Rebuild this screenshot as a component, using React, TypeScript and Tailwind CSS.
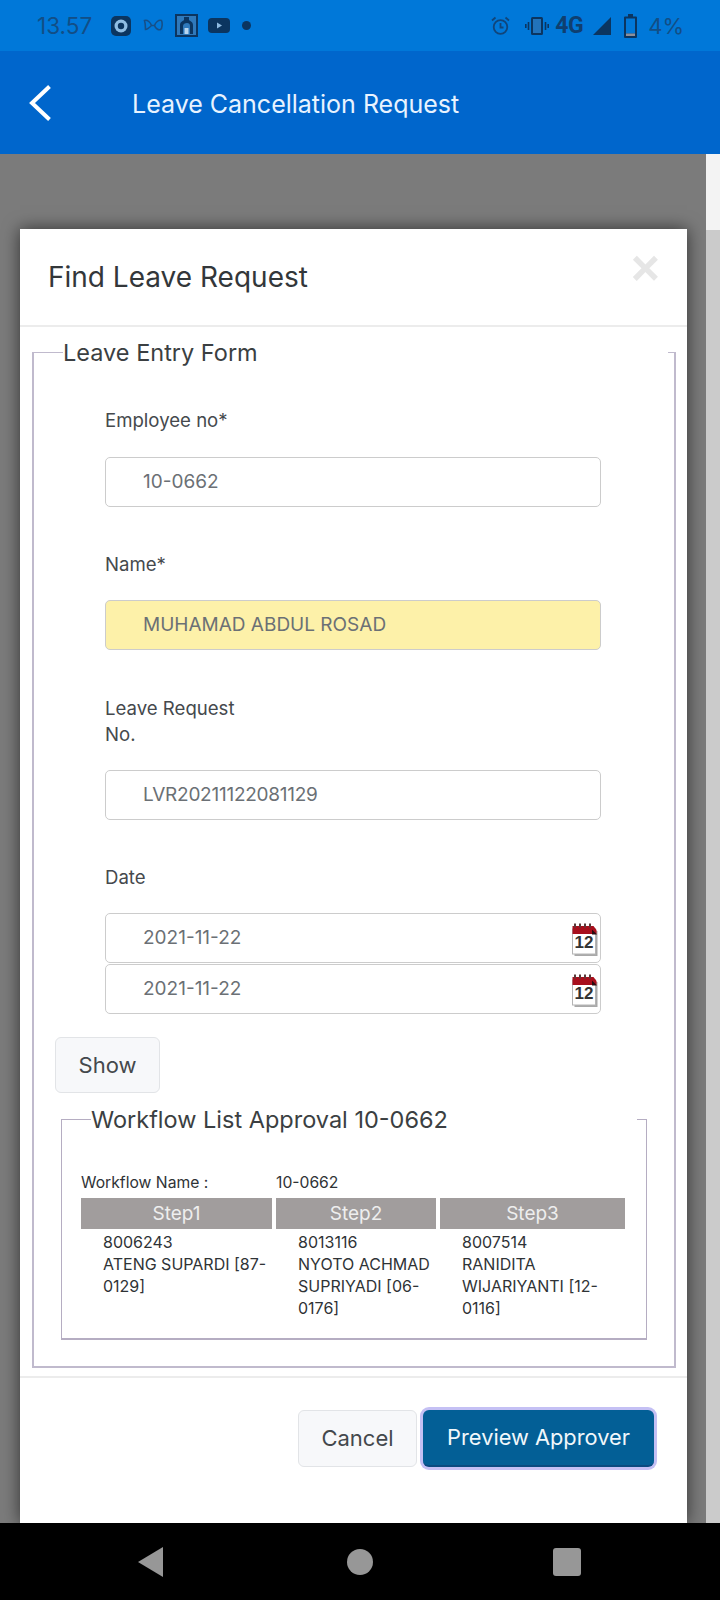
const ui = "font-['Inter',sans-serif]";

/* ── calendar glyph next to the date fields ── */
function CalendarIcon() {
  return (
    <span className="absolute right-[2px] top-[9px] h-[33px] w-[26px]">
      <svg viewBox="0 0 26 33" className="absolute inset-0 h-full w-full">
        <rect x="2.500" y="8" width="23" height="25" fill="#a9a9a9" />
        <rect x="0.500" y="6" width="23" height="25" fill="#fff" stroke="#b5b5b5" />
        <path d="M0.500 3h21l3 4v4h-24z" fill="#a80f1c" />
        <path d="M3 0.500v4M8 0.500v4M13 0.500v4M18 0.500v4" stroke="#5a3a3a" strokeWidth="2" />
        <path d="M20 6.500l5 5h-5z" fill="#2a0c10" />
      </svg>
      <span className="absolute left-0 top-[11px] w-[24px] text-center font-['Liberation_Sans',sans-serif] text-[17px] leading-[18px] font-bold text-[#333]">
        12
      </span>
    </span>
  );
}

function Field({ value, className = '', children }: { value: string; className?: string; children?: React.ReactNode }) {
  return (
    <div className={`relative flex h-[50px] w-[496px] items-center rounded-[5px] border border-[#cccccc] pl-[37px] text-[19px] text-[#6b7075] ${className}`}>
      {value}
      {children}
    </div>
  );
}

function Label({ children, className = '' }: { children: React.ReactNode; className?: string }) {
  return <div className={`w-[150px] text-[18.600px] leading-[26px] text-[#45494d] ${className}`}>{children}</div>;
}

function Step({ no, name }: { no: string; name: string }) {
  return (
    <div className="pl-[22px] pr-[2px] pt-[2px] text-[16px] leading-[22px] text-[#2f3336]">
      {no}
      <br />
      {name}
    </div>
  );
}

function StepHead({ children }: { children: React.ReactNode }) {
  return (
    <div className="flex h-[31px] items-center justify-center bg-[#a19d9d] pt-[2px] text-[19px] text-[#eeeeee]">
      {children}
    </div>
  );
}

export default function App() {
  return (
    <div className={`flex h-[1600px] w-[720px] flex-col overflow-hidden ${ui}`}>
      {/* Status bar */}
      <div className="flex h-[51px] shrink-0 items-center justify-between bg-[#0078d9] pl-[37px] pr-[36px]">
        <div className="flex items-center">
          <span className="text-[22.500px] text-[#124e86]">13.57</span>
          <svg viewBox="0 0 20 20" className="ml-[19px] h-[20px] w-[20px]">
            <rect width="20" height="20" rx="5" fill="#0b3560" />
            <circle cx="10" cy="10" r="6.500" fill="#8fbde3" />
            <circle cx="10" cy="10" r="3.200" fill="#0b3560" />
          </svg>
          <svg viewBox="0 0 20 15" className="ml-[12px] h-[15px] w-[20px]" fill="none" stroke="#164f87" strokeWidth="1.600">
            <path d="M1.500 2.500c3-1 6 2 7 5-2 2-5 4-6 4 0-3 0-6-1-9zM18.500 2.500c-3-1-6 2-7 5 1 3 4 5 6 4s2-7 1-9zM8.500 7.500h3" />
          </svg>
          <svg viewBox="0 0 23 23" className="ml-[12px] h-[23px] w-[23px]">
            <rect x="1" y="1" width="21" height="21" fill="#2f79bb" stroke="#0b3560" strokeWidth="2" />
            <path d="M5 20v-9c0-3 3-4 4-5V3h5v3c1 1 4 2 4 5v9h-3v-8c0-2-1-3-3-3s-4 1-4 3v8z" fill="#0b3560" />
            <path d="M9.500 20v-6h4v6z" fill="#b8d6ef" />
          </svg>
          <svg viewBox="0 0 22 15" className="ml-[10px] h-[15px] w-[22px]">
            <rect width="22" height="15" rx="4" fill="#0b3560" />
            <path d="M9 4.500v6l5-3z" fill="#8ebbe2" />
          </svg>
          <span className="ml-[12px] h-[9px] w-[9px] rounded-full bg-[#0b3560]" />
        </div>
        <div className="flex items-center">
          <svg viewBox="0 0 19 19" className="h-[19px] w-[19px]" fill="none" stroke="#10457a" strokeWidth="1.800">
            <circle cx="9.500" cy="11" r="6.800" />
            <path d="M9.500 7v4.500h3M1 4.500L4.500 1.500M18 4.500L14.500 1.500" />
          </svg>
          <svg viewBox="0 0 24 18" className="ml-[15px] h-[18px] w-[24px]">
            <rect x="6" y="0" width="12" height="18" rx="1.500" fill="#0b3560" />
            <rect x="8" y="2" width="8" height="14" fill="#2273bb" />
            <path d="M3.500 5v8M0.800 7v4M20.500 5v8M23.200 7v4" stroke="#0b3560" strokeWidth="1.600" />
          </svg>
          <span className="ml-[6px] font-['Roboto',sans-serif] text-[23px] leading-none font-bold tracking-[-0.5px] text-[#0f3f70]">4G</span>
          <svg viewBox="0 0 18 18" className="ml-[10px] h-[18px] w-[18px]">
            <path d="M18 0v18H0z" fill="#0b3560" />
          </svg>
          <svg viewBox="0 0 13 24" className="ml-[13px] h-[24px] w-[13px]">
            <path d="M4 0h5v2.500h3a1 1 0 0 1 1 1V23a1 1 0 0 1-1 1H1a1 1 0 0 1-1-1V3.500a1 1 0 0 1 1-1h3z" fill="#0b3560" />
            <rect x="2" y="4.500" width="9" height="15" fill="#0078d9" />
            <rect x="2" y="19.500" width="9" height="2.500" fill="#8d8f9b" />
          </svg>
          <span className="ml-[11px] text-[22px] leading-none text-[#124e86]">4%</span>
        </div>
      </div>

      {/* App bar */}
      <div className="flex h-[103px] shrink-0 items-center bg-[#0066cc]">
        <svg viewBox="0 0 22 36" className="ml-[29px] h-[36px] w-[22px]" fill="none" stroke="#ffffff" strokeWidth="4">
          <path d="M20.500 1.500L3 18l17.500 16.500" />
        </svg>
        <span className="ml-[81px] mt-[5px] text-[25px] text-[#e8f3ff]">Leave Cancellation Request</span>
      </div>

      {/* Dimmed page + modal */}
      <div className="flex min-h-0 flex-1">
        <div className="min-w-0 flex-1 overflow-hidden bg-[#7b7b7b] pl-[20px] pt-[75px]">
          <div className="w-[667px] bg-white shadow-[0_0_16px_rgba(0,0,0,0.6)]">
            <div className="relative flex h-[98px] items-center border-b-2 border-[#ececec] pl-[28px]">
              <h2 className="text-[28px] leading-none font-normal text-[#33373a]">Find Leave Request</h2>
              <span className="absolute right-[27px] top-[21px] font-['Liberation_Sans',sans-serif] text-[50px] leading-[36px] font-bold text-[#e6e6e6]">
                ×
              </span>
            </div>

            <div className="pb-[8px] pl-[12px] pr-[11px] pt-[12px]">
              <fieldset className="border-x-2 border-b-2 border-t border-[#c0bacd] pb-[26px] pl-[71px]">
                <legend className="ml-[-42px] w-[605px] text-[23.500px] leading-[27px] text-[#3b3f42]">Leave Entry Form</legend>
                <Label className="mt-[41px]">Employee no*</Label>
                <Field value="10-0662" className="mt-[24px]" />
                <Label className="mt-[44px]">Name*</Label>
                <Field value="MUHAMAD ABDUL ROSAD" className="mt-[23px] bg-[#fdf1a9]" />
                <Label className="mt-[45px]">Leave Request No.</Label>
                <Field value="LVR20211122081129" className="mt-[23px] tracking-[-0.250px]" />
                <Label className="mt-[44px]">Date</Label>
                <Field value="2021-11-22" className="mt-[23px]"><CalendarIcon /></Field>
                <Field value="2021-11-22" className="mt-[1px]"><CalendarIcon /></Field>

                <button className="ml-[-50px] mt-[23px] block h-[56px] w-[105px] rounded-[6px] border border-[#e2e4e7] bg-[#f7f8fa] text-[22px] text-[#44484c]">
                  Show
                </button>

                <fieldset className="ml-[-44px] mt-[13px] w-[586px] border border-b-2 border-[#b5adc2] pb-[19px] pl-[19px]">
                  <legend className="ml-[10px] w-[546px] text-[23.500px] leading-[27px] text-[#3b3f42]">Workflow List Approval 10-0662</legend>
                  <div className="mt-[38px] flex text-[15.700px] leading-[24px] text-[#2f3336]">
                    <span className="w-[195px]">Workflow Name :</span>
                    <span>10-0662</span>
                  </div>
                  <div className="mt-[3px] grid w-[544px] grid-cols-[191px_160px_185px] gap-x-[4px]">
                    <StepHead>Step1</StepHead>
                    <StepHead>Step2</StepHead>
                    <StepHead>Step3</StepHead>
                    <Step no="8006243" name="ATENG SUPARDI [87-0129]" />
                    <Step no="8013116" name="NYOTO ACHMAD SUPRIYADI [06-0176]" />
                    <Step no="8007514" name="RANIDITA WIJARIYANTI [12-0116]" />
                  </div>
                </fieldset>
              </fieldset>
            </div>

            {/* Footer buttons */}
            <div className="flex h-[147px] justify-end gap-[6px] border-t-2 border-[#ececec] pr-[33px] pt-[32px]">
              <button className="h-[57px] w-[119px] rounded-[6px] border border-[#e2e4e7] bg-[#f7f8fa] text-[22px] text-[#44484c]">
                Cancel
              </button>
              <button className="h-[57px] w-[231px] rounded-[6px] border-b-2 border-[#0a4a80] bg-[#035f96] text-[21.800px] text-[#f1f7fb] ring-3 ring-[#c4c0f4]">
                Preview Approver
              </button>
            </div>
          </div>
        </div>

        {/* Page scrollbar */}
        <div className="w-[14px] shrink-0 bg-[#f3f3f3] pt-[76px]">
          <div className="h-full bg-[#cbcbcb]" />
        </div>
      </div>

      {/* Android nav bar */}
      <div className="flex h-[77px] shrink-0 items-center bg-black">
        <svg viewBox="0 0 25 30" className="ml-[138px] h-[30px] w-[25px]">
          <path d="M25 0v30L0 15z" fill="#979797" />
        </svg>
        <span className="ml-[184px] h-[26px] w-[26px] rounded-full bg-[#979797]" />
        <span className="ml-[180px] h-[28px] w-[28px] rounded-[3px] bg-[#979797]" />
      </div>
    </div>
  );
}
